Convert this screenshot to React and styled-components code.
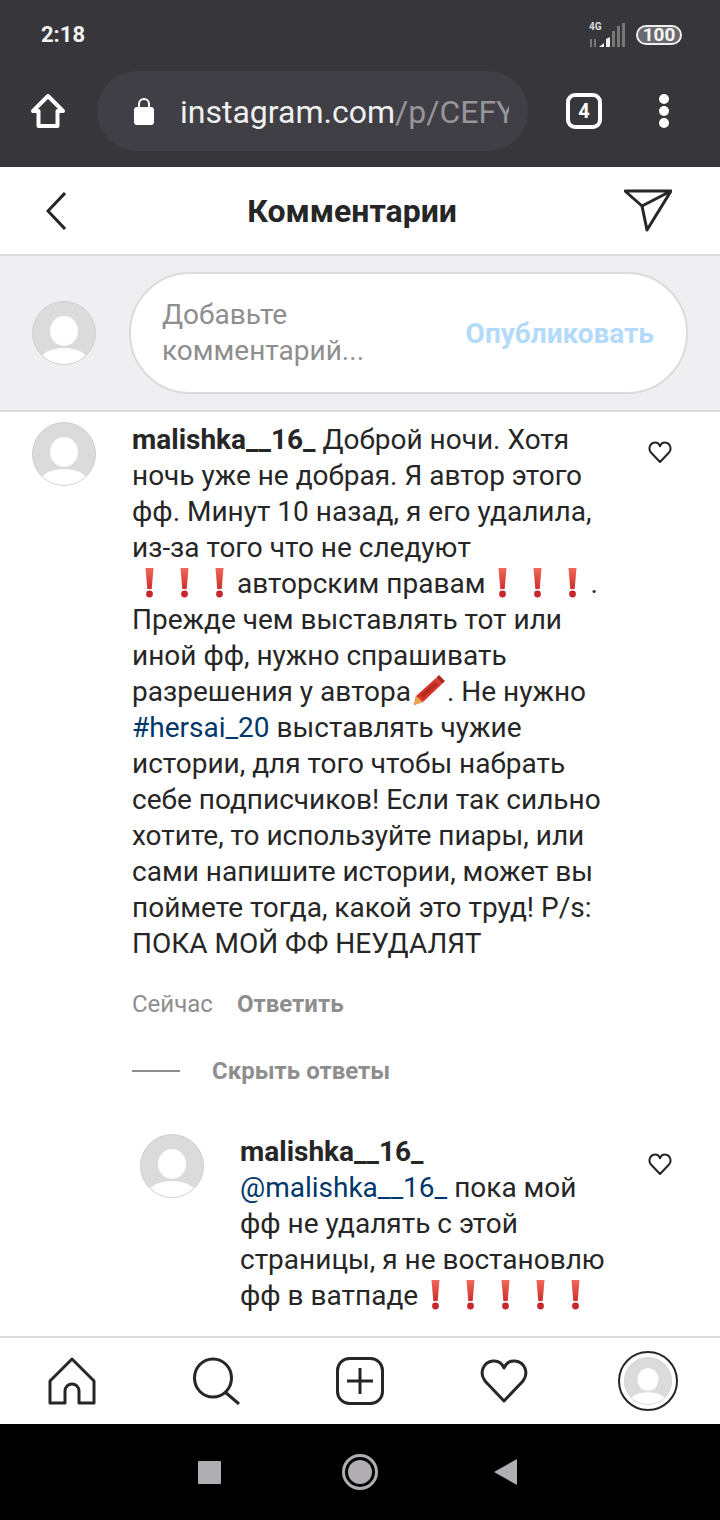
import styled, { createGlobalStyle } from 'styled-components';

const GlobalStyle = createGlobalStyle`
  html, body {
    margin: 0;
    padding: 0;
    background: #fff;
    font-family: Roboto, "Liberation Sans", sans-serif;
  }
  * { box-sizing: border-box; }
`;

const Page = styled.div`
  width: 720px;
  height: 1520px;
  display: flex;
  flex-direction: column;
  overflow: hidden;
  color: #262626;
`;

const Chrome = styled.div`
  height: 167px;
  flex: none;
  background: #36363b;
  display: flex;
  flex-direction: column;
`;

const StatusBar = styled.div`
  height: 71px;
  padding: 0 38px 2px 41px;
  display: flex;
  align-items: center;
  justify-content: space-between;
`;

const Time = styled.span`
  color: #f2f2f2;
  font-size: 22px;
  font-weight: 700;
`;

const StatusRight = styled.div`
  display: flex;
  align-items: center;
  gap: 10px;
`;

const Battery = styled.span`
  width: 46px;
  height: 20px;
  border: 2px solid #eee;
  border-radius: 10px;
  background: #6a6a6e;
  color: #f5f5f5;
  font-size: 19px;
  font-weight: 700;
  line-height: 16px;
  text-align: center;
`;

const UrlRow = styled.div`
  height: 80px;
  padding-left: 30px;
  display: flex;
  align-items: center;
`;

const UrlPill = styled.div`
  width: 431px;
  height: 80px;
  margin-left: 31px;
  margin-right: 38px;
  padding-left: 37px;
  background: #3f3f45;
  border-radius: 40px;
  display: flex;
  align-items: center;
  gap: 26px;
`;

const UrlText = styled.div`
  width: 329px;
  padding-top: 2px;
  overflow: hidden;
  white-space: nowrap;
  font-size: 32px;
  color: #f0f0f0;
  span { color: #96969a; }
`;

const TabCount = styled.div`
  width: 36px;
  height: 36px;
  border: 4px solid #fff;
  border-radius: 9px;
  color: #fff;
  font-size: 20px;
  font-weight: 700;
  line-height: 28px;
  text-align: center;
`;

const Dots = styled.div`
  margin-left: 57px;
  display: flex;
  flex-direction: column;
  gap: 2px;
  i {
    display: block;
    width: 10px;
    height: 10px;
    border-radius: 50%;
    background: #fff;
  }
`;

const Header = styled.div`
  height: 89px;
  flex: none;
  padding: 0 48px 0 46px;
  background: #fff;
  border-bottom: 2px solid #dcdcdc;
  display: flex;
  align-items: center;
  justify-content: space-between;
`;

const Title = styled.h1`
  margin: 1px 0 0 14px;
  font-size: 32px;
  font-weight: 700;
  color: #262626;
`;

const Composer = styled.div`
  height: 156px;
  flex: none;
  padding: 0 32px;
  background: #efeff1;
  border-bottom: 2px solid #dbdbdb;
  display: flex;
  align-items: center;
  gap: 33px;
`;

const Avatar = styled.svg`
  width: ${(p) => p.$size || 64}px;
  height: ${(p) => p.$size || 64}px;
  flex: none;
  display: block;
`;

const ComposerPill = styled.div`
  width: 559px;
  height: 122px;
  padding: 0 32px 0 31px;
  background: #fff;
  border: 2px solid #dbdbdb;
  border-radius: 61px;
  display: flex;
  align-items: center;
  justify-content: space-between;
`;

const Placeholder = styled.div`
  font-size: 28px;
  line-height: 36px;
  color: #8e8e8e;
`;

const Publish = styled.span`
  font-size: 28px;
  font-weight: 700;
  color: #b3dbf9;
`;

const List = styled.div`
  flex: 1;
  min-height: 0;
  overflow: hidden;
  background: #fff;
`;

const CommentRow = styled.div`
  display: flex;
  align-items: flex-start;
  padding-top: ${(p) => (p.$reply ? 0 : 10)}px;
  padding-left: ${(p) => (p.$reply ? 140 : 32)}px;
  gap: 36px;
`;

const CommentBody = styled.div`
  width: ${(p) => (p.$reply ? 372 : 480)}px;
  flex: none;
  font-size: 28px;
  line-height: 36px;
  color: #262626;
`;

const UserName = styled.b`
  font-weight: 700;
  display: ${(p) => (p.$block ? 'block' : 'inline')};
`;

const Tag = styled.span`
  color: #00376b;
`;

const NoBreak = styled.span`
  white-space: nowrap;
`;

const HeartSlot = styled.div`
  flex: none;
  margin-top: 18px;
`;

const Meta = styled.div`
  margin: 24px 0 0 132px;
  display: flex;
  gap: 24px;
  font-size: 24px;
  line-height: 36px;
  color: #8e8e8e;
  b { font-weight: 700; }
`;

const ToggleReplies = styled.div`
  margin: 31px 0 45px 132px;
  display: flex;
  align-items: center;
  gap: 32px;
  font-size: 24px;
  line-height: 36px;
  font-weight: 700;
  color: #8e8e8e;
  &::before {
    content: '';
    width: 48px;
    height: 2px;
    background: #8e8e8e;
  }
`;

const Mark = styled.svg`
  width: ${(p) => p.$w || 35}px;
  height: 32px;
  vertical-align: -5px;
`;

const TabBar = styled.div`
  height: 88px;
  flex: none;
  padding-left: 48px;
  background: #fff;
  border-top: 2px solid #dbdbdb;
  display: flex;
  align-items: center;
  gap: 96px;
`;

const ProfileRing = styled.div`
  width: 60px;
  height: 60px;
  margin-left: -6px;
  border: 2px solid #262626;
  border-radius: 50%;
  padding: 4px;
`;

const NavBar = styled.div`
  height: 96px;
  flex: none;
  background: #000;
  padding-left: 198px;
  display: flex;
  align-items: center;
`;

const NavSquare = styled.div`
  width: 23px;
  height: 23px;
  border-radius: 1px;
  background: #b0aeb2;
`;

const NavCircle = styled.div`
  width: 36px;
  height: 36px;
  margin-left: 121px;
  margin-right: 116px;
  border: 3px solid #b0aeb2;
  border-radius: 50%;
  padding: 3px;
  &::after {
    content: '';
    display: block;
    width: 24px;
    height: 24px;
    border-radius: 50%;
    background: #b0aeb2;
  }
`;

const UserPic = ({ size }) => (
  <Avatar $size={size} viewBox="0 0 64 64">
    <defs>
      <clipPath id="face">
        <circle cx="32" cy="32" r="31" />
      </clipPath>
    </defs>
    <circle cx="32" cy="32" r="31.5" fill="#dbdbdc" stroke="#cfcfcf" />
    <g clipPath="url(#face)" fill="#fff">
      <ellipse cx="32" cy="30" rx="14" ry="15" />
      <ellipse cx="32" cy="60" rx="24" ry="13" />
    </g>
  </Avatar>
);

const Bang = () => (
  <Mark viewBox="0 0 35 32">
    <defs>
      <linearGradient id="bangFill" x1="0" y1="0" x2="0" y2="1">
        <stop offset="0" stopColor="#f0685c" />
        <stop offset="1" stopColor="#d12f2c" />
      </linearGradient>
    </defs>
    <path d="M13.500 2h8l-1.800 21h-4.400z" fill="url(#bangFill)" />
    <circle cx="17.500" cy="28" r="3.400" fill="#c9262b" />
  </Mark>
);

const Crayon = () => (
  <Mark $w={36} viewBox="0 0 36 32">
    <path d="M3 31l2-9L25 4l6 6-19 18z" fill="#d5392b" />
    <path d="M25 4l3-3 6 6-3 3z" fill="#a82a20" />
    <path d="M9 21 24 8l3 3-15 13z" fill="#b82c22" />
    <path d="M3 31l2-9 7 6z" fill="#e9a44c" />
  </Mark>
);

const Heart = ({ size = 24, stroke = 2 }) => (
  <svg width={size} height={size} viewBox="0 0 24 24" fill="none" stroke="#262626" strokeWidth={stroke} strokeLinejoin="round">
    <path d="M12 22 3 12.500C.2 9.400 1.400 3.600 6 2.700c2.800-.5 5 1 6 3.600 1-2.600 3.200-4.100 6-3.600 4.600.9 5.800 6.700 3 9.800z" />
  </svg>
);

export default function App() {
  return (
    <Page>
      <GlobalStyle />
      <Chrome>
        <StatusBar>
          <Time>2:18</Time>
          <StatusRight>
            <svg width="38" height="28" viewBox="0 0 38 28">
              <text x="1" y="9" fontSize="10" fontWeight="700" fill="#ddd" fontFamily="Roboto">4G</text>
              <path d="M2 18h2v8H2zM6 18h2v8H6z" fill="#77777a" />
              <path d="M11 26l5-4v4zM18 26v-8l4-2v10z" fill="#f0f0f0" />
              <path d="M24 26V10h3v16zM29 26V5h3v21zM34 26V2h3v24z" fill="#77777a" />
            </svg>
            <Battery>100</Battery>
          </StatusRight>
        </StatusBar>
        <UrlRow>
          <svg width="36" height="36" viewBox="0 0 36 36" fill="none" stroke="#fff" strokeWidth="4" strokeLinejoin="round">
            <path d="M18 3 3 18h5.500v15h19V18H33z" />
          </svg>
          <UrlPill>
            <svg width="20" height="28" viewBox="0 0 20 28" fill="#fff">
              <path d="M5 12V7a5 5 0 0 1 10 0v5" fill="none" stroke="#fff" strokeWidth="2" />
              <rect y="10" width="20" height="18" rx="3" />
            </svg>
            <UrlText>instagram.com<span>/p/CEFY</span></UrlText>
          </UrlPill>
          <TabCount>4</TabCount>
          <Dots>
            <i />
            <i />
            <i />
          </Dots>
        </UrlRow>
      </Chrome>

      <Header>
        <svg width="20" height="38" viewBox="0 0 20 38" fill="none" stroke="#262626" strokeWidth="3">
          <path d="M19 1 2 19l17 18" />
        </svg>
        <Title>Комментарии</Title>
        <svg width="48" height="44" viewBox="0 0 48 44" fill="none" stroke="#262626" strokeWidth="3" strokeLinejoin="round">
          <path d="M1 2h46L23 41l-5-24zM18 17 47 2" />
        </svg>
      </Header>

      <Composer>
        <UserPic />
        <ComposerPill>
          <Placeholder>
            Добавьте
            <br />
            комментарий...
          </Placeholder>
          <Publish>Опубликовать</Publish>
        </ComposerPill>
      </Composer>

      <List>
        <CommentRow>
          <UserPic />
          <CommentBody>
            <UserName>malishka__16_</UserName> Доброй ночи. Хотя ночь уже не добрая. Я автор этого
            фф. Минут 10 назад, я его удалила, из-за того что не следуют{' '}
            <NoBreak>
              <Bang />
              <Bang />
              <Bang />
              авторским
            </NoBreak>{' '}
            <NoBreak>
              правам
              <Bang />
              <Bang />
              <Bang />.
            </NoBreak>{' '}
            Прежде чем выставлять тот или иной фф, нужно спрашивать разрешения у{' '}
            <NoBreak>
              автора
              <Crayon />.
            </NoBreak>{' '}
            Не нужно <Tag>#hersai_20</Tag> выставлять чужие истории, для того чтобы набрать себе
            подписчиков! Если так сильно хотите, то используйте пиары, или сами напишите истории,
            может вы поймете тогда, какой это труд! P/s: ПОКА МОЙ ФФ НЕУДАЛЯТ
          </CommentBody>
          <HeartSlot>
            <Heart />
          </HeartSlot>
        </CommentRow>
        <Meta>
          <span>Сейчас</span>
          <b>Ответить</b>
        </Meta>
        <ToggleReplies>Скрыть ответы</ToggleReplies>
        <CommentRow $reply>
          <UserPic />
          <CommentBody $reply>
            <UserName $block>malishka__16_</UserName>
            <Tag>@malishka__16_</Tag> пока мой фф не удалять с этой страницы, я не востановлю фф в{' '}
            <NoBreak>
              ватпаде
              <Bang />
              <Bang />
              <Bang />
              <Bang />
              <Bang />
            </NoBreak>
          </CommentBody>
          <HeartSlot>
            <Heart />
          </HeartSlot>
        </CommentRow>
      </List>

      <TabBar>
        <svg width="48" height="48" viewBox="0 0 48 48" fill="none" stroke="#262626" strokeWidth="3" strokeLinejoin="round">
          <path d="M24 2 2 24v22h15V34a7 7 0 0 1 14 0v12h15V24z" />
        </svg>
        <svg width="48" height="48" viewBox="0 0 48 48" fill="none" stroke="#262626" strokeWidth="3">
          <ellipse cx="21" cy="21" rx="18.500" ry="19" />
          <path d="M33 35 47 47" />
        </svg>
        <svg width="48" height="48" viewBox="0 0 48 48" fill="none" stroke="#262626" strokeWidth="3">
          <rect x="1.500" y="1.500" width="45" height="45" rx="12" />
          <path d="M24 11v26M11 24h26" />
        </svg>
        <svg width="48" height="44" viewBox="0 0 48 44" fill="none" stroke="#262626" strokeWidth="3" strokeLinejoin="round">
          <path d="M24 42 5 22C-1 14 3 3 13 2c5-.4 9 2 11 7 2-5 6-7.400 11-7 10 1 14 12 8 20z" />
        </svg>
        <ProfileRing>
          <UserPic size={48} />
        </ProfileRing>
      </TabBar>

      <NavBar>
        <NavSquare />
        <NavCircle />
        <svg width="24" height="26" viewBox="0 0 24 26">
          <path d="M0 13 23 0v26z" fill="#b0aeb2" />
        </svg>
      </NavBar>
    </Page>
  );
}
